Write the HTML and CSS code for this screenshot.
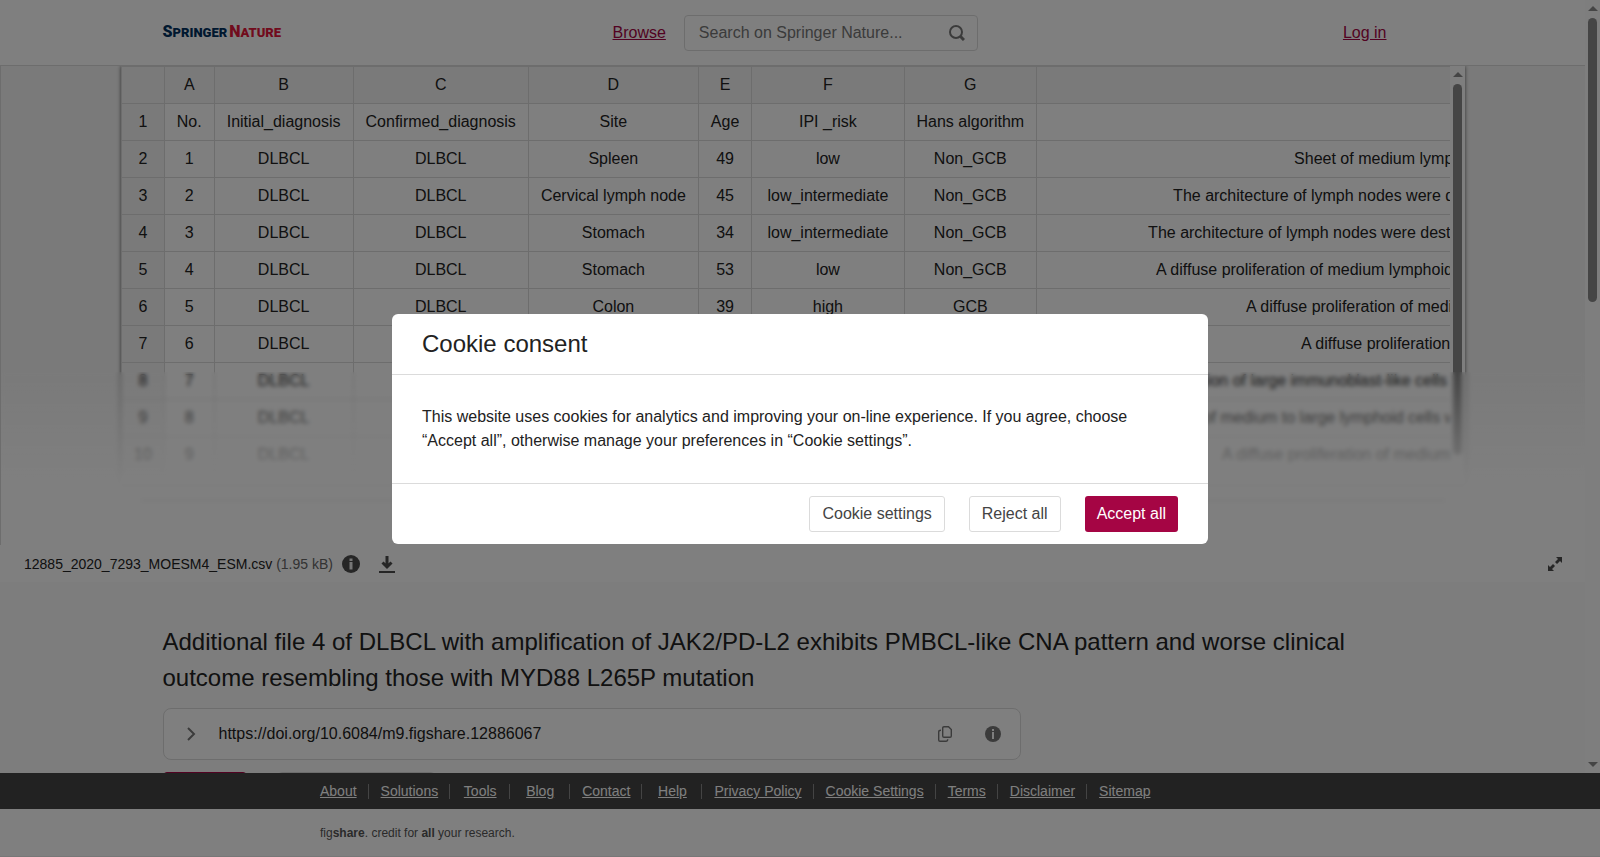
FILE: index.html
```
<!DOCTYPE html>
<html lang="en">
<head>
<meta charset="utf-8">
<title>Additional file 4 of DLBCL - Springer Nature</title>
<link rel="stylesheet" href="styles.css">
</head>
<body>
<div class="page">
<div class="scroller">
  <header class="header">
    <div class="header-inner">
      <a class="logo" href="#" aria-label="Springer Nature"><span class="logo-first"><b>S</b>PRINGER</span><span class="logo-second"><b>N</b>ATURE</span></a>
      <div class="header-tools">
        <a class="brand-link" href="#">Browse</a>
        <form class="search">
          <input type="search" aria-label="Search on Springer Nature" placeholder="Search on Springer Nature...">
          <button class="icon-button" type="button" aria-label="Search">
            <svg width="16" height="16" viewBox="0 0 16 16" fill="none" stroke="#777" stroke-width="2"><circle cx="7" cy="7" r="6"/><path d="M11.5 11.5l3.5 3.5" stroke-width="3"/></svg>
          </button>
        </form>
      </div>
      <a class="brand-link login" href="#">Log in</a>
    </div>
  </header>

  <main>
    <section class="viewer">
      <div class="sheet">
        <div class="sheet-content">
          <table class="grid">
            <thead>
              <tr><th></th><th>A</th><th>B</th><th>C</th><th>D</th><th>E</th><th>F</th><th>G</th><th class="wide"></th></tr>
            </thead>
            <tbody>
              <tr><th>1</th><td>No.</td><td>Initial_diagnosis</td><td>Confirmed_diagnosis</td><td>Site</td><td>Age</td><td>IPI _risk</td><td>Hans algorithm</td><td class="wide"></td></tr>
              <tr><th>2</th><td>1</td><td>DLBCL</td><td>DLBCL</td><td>Spleen</td><td>49</td><td>low</td><td>Non_GCB</td><td class="wide" style="--lead:257px">Sheet of medium lymphoid cells</td></tr>
              <tr><th>3</th><td>2</td><td>DLBCL</td><td>DLBCL</td><td>Cervical lymph node</td><td>45</td><td>low_intermediate</td><td>Non_GCB</td><td class="wide" style="--lead:136px">The architecture of lymph nodes were destroyed</td></tr>
              <tr><th>4</th><td>3</td><td>DLBCL</td><td>DLBCL</td><td>Stomach</td><td>34</td><td>low_intermediate</td><td>Non_GCB</td><td class="wide" style="--lead:111px">The architecture of lymph nodes were destroyed</td></tr>
              <tr><th>5</th><td>4</td><td>DLBCL</td><td>DLBCL</td><td>Stomach</td><td>53</td><td>low</td><td>Non_GCB</td><td class="wide" style="--lead:119px">A diffuse proliferation of medium lymphoid cells</td></tr>
              <tr><th>6</th><td>5</td><td>DLBCL</td><td>DLBCL</td><td>Colon</td><td>39</td><td>high</td><td>GCB</td><td class="wide" style="--lead:209px">A diffuse proliferation of medium cells</td></tr>
              <tr><th>7</th><td>6</td><td>DLBCL</td><td></td><td></td><td></td><td>high_intermediate</td><td></td><td class="wide" style="--lead:264px">A diffuse proliferation of cells</td></tr>
              <tr><th>8</th><td>7</td><td>DLBCL</td><td></td><td></td><td></td><td></td><td></td><td class="wide" style="--lead:42px">A diffuse proliferation of large immunoblast-like cells</td></tr>
              <tr><th>9</th><td>8</td><td>DLBCL</td><td></td><td></td><td></td><td></td><td></td><td class="wide" style="--lead:12px">A diffuse proliferation of medium to large lymphoid cells with</td></tr>
              <tr><th>10</th><td>9</td><td>DLBCL</td><td></td><td></td><td></td><td></td><td></td><td class="wide" style="--lead:185px">A diffuse proliferation of medium cells</td></tr>
            </tbody>
          </table>
        </div>
        <div class="scrollbar" aria-hidden="true">
          <span class="arrow up"></span>
          <span class="track"><span class="thumb" style="height:100%"></span></span>
        </div>
      </div>
      <div class="sheet-divider"></div>
      <div class="viewer-fade"></div>
    </section>

    <div class="file-bar">
      <span class="file-name">12885_2020_7293_MOESM4_ESM.csv <span class="file-size">(1.95 kB)</span></span>
      <button class="icon-button" type="button" aria-label="File details">
        <svg width="18" height="18" viewBox="0 0 18 18"><circle cx="9" cy="9" r="9" fill="#4c4c4c"/><path d="M7.500 3.500h3v2.500h-3zM7.500 7h3v7.500h-3z" fill="#eee"/></svg>
      </button>
      <button class="icon-button" type="button" aria-label="Download">
        <svg width="16" height="18" viewBox="0 0 16 18" fill="none" stroke="#4c4c4c"><path d="M8 1v11M3.500 7.500L8 12l4.500-4.500" stroke-width="3"/><path d="M0 17h16" stroke-width="2"/></svg>
      </button>
      <button class="icon-button expand" type="button" aria-label="Full screen">
        <svg width="14" height="14" viewBox="0 0 14 14"><path d="M8 0h6v6l-2-2-3 3-2-2 3-3zM6 14H0V8l2 2 3-3 2 2-3 3z" fill="#4c4c4c"/></svg>
      </button>
    </div>

    <section class="details">
      <h1>Additional file 4 of DLBCL with amplification of JAK2/PD-L2 exhibits PMBCL-like CNA pattern and worse clinical outcome resembling those with MYD88 L265P mutation</h1>
      <div class="doi">
        <button class="icon-button" type="button" aria-label="Show citation">
          <svg width="9" height="14" viewBox="0 0 9 14" fill="none" stroke="#777" stroke-width="2"><path d="M1 1l6 6-6 6"/></svg>
        </button>
        <span class="doi-text">https://doi.org/10.6084/m9.figshare.12886067</span>
        <button class="icon-button" type="button" aria-label="Copy DOI">
          <svg width="14" height="16" viewBox="0 0 14 16" fill="none" stroke="#777" stroke-width="1.400"><path d="M6 .7h4.500l2.800 2.800V10q0 1.300-1.300 1.300H6Q4.700 11.300 4.700 10V2Q4.700.7 6 .7z"/><path d="M3 4.300Q.7 4.300.7 6v8q0 1.300 1.300 1.300h6q1.700 0 1.700-2"/></svg>
        </button>
        <button class="icon-button" type="button" aria-label="About DOI">
          <svg width="16" height="16" viewBox="0 0 16 16"><circle cx="8" cy="8" r="8" fill="#777"/><path d="M7 3h2v2H7zM7 6h2v7H7z" fill="#fff"/></svg>
        </button>
      </div>
      <div class="actions">
        <button class="action primary" type="button" aria-label="Cite"></button>
        <button class="action share" type="button" aria-label="Share"></button>
      </div>
    </section>
  </main>
</div>
<div class="scrollbar" aria-hidden="true">
  <span class="arrow up"></span>
  <span class="track"><span class="thumb" style="height:38.6%"></span></span>
  <span class="arrow down"></span>
</div>
</div>

<footer class="footer">
  <nav class="footer-nav">
    <ul>
      <li><a href="#">About</a></li><li><a href="#">Solutions</a></li><li><a href="#">Tools</a></li><li><a href="#">Blog</a></li><li><a href="#">Contact</a></li><li><a href="#">Help</a></li><li><a href="#">Privacy Policy</a></li><li><a href="#">Cookie Settings</a></li><li><a href="#">Terms</a></li><li><a href="#">Disclaimer</a></li><li><a href="#">Sitemap</a></li>
    </ul>
  </nav>
  <div class="footer-note"><p>fig<b>share</b>. credit for <b>all</b> your research.</p></div>
</footer>

<div class="backdrop">
  <div class="modal" role="dialog" aria-modal="true" aria-labelledby="cookie-title">
    <h2 id="cookie-title">Cookie consent</h2>
    <p>This website uses cookies for analytics and improving your on-line experience. If you agree, choose “Accept all”, otherwise manage your preferences in “Cookie settings”.</p>
    <div class="modal-actions">
      <button class="button" type="button">Cookie settings</button>
      <button class="button" type="button">Reject all</button>
      <button class="button accept" type="button">Accept all</button>
    </div>
  </div>
</div>
</body>
</html>
```
FILE: styles.css
```
* { box-sizing: border-box; }

body {
  margin: 0;
  height: 100vh;
  display: flex;
  flex-direction: column;
  overflow: hidden;
  font: 16px/24px "Liberation Sans", Arial, sans-serif;
  color: #222;
  background: #fff;
}

h1, h2, p, ul { margin: 0; padding: 0; font-weight: 400; }
button, input { font: inherit; }
svg { display: block; }

.icon-button {
  padding: 0;
  border: 0;
  background: none;
}

.page {
  flex: 1;
  min-height: 0;
  display: flex;
}
.scroller {
  flex: 1;
  min-width: 0;
  overflow-y: auto;
  scrollbar-width: none;
}

/* Scrollbars */
.scrollbar {
  flex: none;
  display: flex;
  flex-direction: column;
  align-items: center;
  width: 15px;
  padding: 6px 0;
  background: #fcfcfc;
}
.track {
  flex: 1;
  width: 9px;
  margin: 7px 0;
}
.thumb {
  display: block;
  border-radius: 5px;
  background: #8b8b8b;
}
.arrow {
  border: 0 solid transparent;
  border-width: 0 5px;
}
.arrow.up { border-bottom: 5px solid #8b8b8b; }
.arrow.down { border-top: 5px solid #8b8b8b; }

/* Header */
.header { border-bottom: 1px solid #dbdbdb; }

.header-inner {
  display: grid;
  grid-template-columns: 450px auto 1fr;
  align-items: center;
  max-width: 1260px;
  margin: 0 auto;
  height: 65px;
}

.logo {
  display: flex;
  align-items: baseline;
  gap: 2px;
  font: 900 13px/24px Roboto, sans-serif;
  text-decoration: none;
}
.logo b { font-size: 16px; font-weight: inherit; }
.logo-first { color: #01305f; }
.logo-second { color: #e3173a; }

.header-tools { display: flex; align-items: center; gap: 18px; }
.brand-link { color: #a50544; }
.login { justify-self: end; margin-right: 36px; }

.search {
  display: flex;
  align-items: center;
  width: 294px;
  height: 36px;
  padding: 0 12px 0 14px;
  border: 1px solid #dbdbdb;
  border-radius: 4px;
}
.search input {
  flex: 1;
  min-width: 0;
  padding: 0;
  border: 0;
  outline: 0;
  background: none;
}
.search input::placeholder { color: #767676; }

/* Spreadsheet preview */
.viewer {
  position: relative;
  height: 479px;
  padding: 0 120px;
  overflow: hidden;
  border-left: 1px solid #dbdbdb;
  background: #f5f5f5;
}

.sheet {
  display: flex;
  height: 418px;
  background: #fff;
  box-shadow: 0 0 4px rgba(0, 0, 0, .6);
}
.sheet-content {
  flex: 1;
  min-width: 0;
  overflow: auto;
  scrollbar-width: none;
}
.sheet .scrollbar { padding-bottom: 22px; }

.grid { border-collapse: collapse; }
.grid th, .grid td {
  height: 37px;
  padding: 0 12px;
  border: 1px solid #dbdbdb;
  font-weight: 400;
  text-align: center;
  white-space: nowrap;
}
.grid th { background: #f5f5f5; }
.grid .wide {
  min-width: 1400px;
  padding-left: var(--lead, 12px);
  text-align: left;
}

.sheet-divider {
  margin: 15px 20px 0;
  border-top: 3px solid #999;
}

.viewer-fade {
  position: absolute;
  inset: auto 0 0 0;
  height: 173px;
  background: linear-gradient(rgba(255, 255, 255, 0), rgba(255, 255, 255, .92) 62%, rgba(255, 255, 255, .92) 85%, #fff);
  backdrop-filter: blur(2px);
}

.file-bar {
  display: flex;
  align-items: center;
  height: 37px;
  padding: 0 23px 0 24px;
  font-size: 14px;
  background: #fff;
}
.file-size { color: #666; }
.file-bar .icon-button { margin-left: 9px; }
.file-bar .icon-button + .icon-button { margin-left: 19px; }
.file-bar .expand.icon-button { margin-left: auto; }

/* Item details */
.details {
  min-height: 1424px;
  padding: 42px max(16px, calc((100% - 1260px) / 2)) 0;
  background: #fafafa;
}
.details h1 { font-size: 24px; line-height: 36px; }

.doi {
  display: flex;
  align-items: center;
  gap: 33px;
  max-width: 858px;
  height: 52px;
  margin: 12px 0;
  padding: 0 19px 0 23px;
  border: 1px solid #dbdbdb;
  border-radius: 8px;
  background: #fff;
}
.doi-text { flex: 1; margin-left: -10px; }

.actions { display: flex; gap: 31px; }
.action {
  width: 157px;
  height: 36px;
  border: 1px solid #dbdbdb;
  border-radius: 4px;
  background: #fff;
}
.action.primary {
  width: 84px;
  border-color: #a50544;
  background: #a50544;
}

/* Footer */
.footer-nav { background: #444; }
.footer-nav ul {
  display: flex;
  max-width: 984px;
  margin: 0 auto;
  padding: 11px 0 10px;
  list-style: none;
  font-size: 14px;
  line-height: 15px;
}
.footer-nav li {
  min-width: 60px;
  padding: 0 11px 0 12px;
  border-right: 1px solid #888;
  text-align: center;
}
.footer-nav li:last-child { border: 0; }
.footer-nav a { color: #fff; }

.footer-note {
  border-bottom: 1px solid #eee;
  font-size: 12px;
  color: #555;
}
.footer-note p {
  max-width: 960px;
  margin: 0 auto;
  padding: 12px 0 11px;
}

/* Cookie dialog */
.backdrop {
  position: fixed;
  inset: 0;
  display: flex;
  align-items: center;
  justify-content: center;
  background: rgba(0, 0, 0, .5);
}
.modal {
  width: 816px;
  border-radius: 6px;
  background: #fff;
}
.modal h2 {
  padding: 12px 30px;
  border-bottom: 1px solid #dbdbdb;
  font-size: 24px;
  line-height: 36px;
}
.modal p { padding: 30px; }
.modal-actions {
  display: flex;
  justify-content: flex-end;
  gap: 24px;
  padding: 12px 30px;
  border-top: 1px solid #dbdbdb;
}
.button {
  height: 36px;
  padding: 0 12px;
  border: 1px solid #dbdbdb;
  border-radius: 3px;
  background: #fff;
  color: #444;
}
.button.accept {
  border: 0;
  background: #a50544;
  color: #fff;
}
```
